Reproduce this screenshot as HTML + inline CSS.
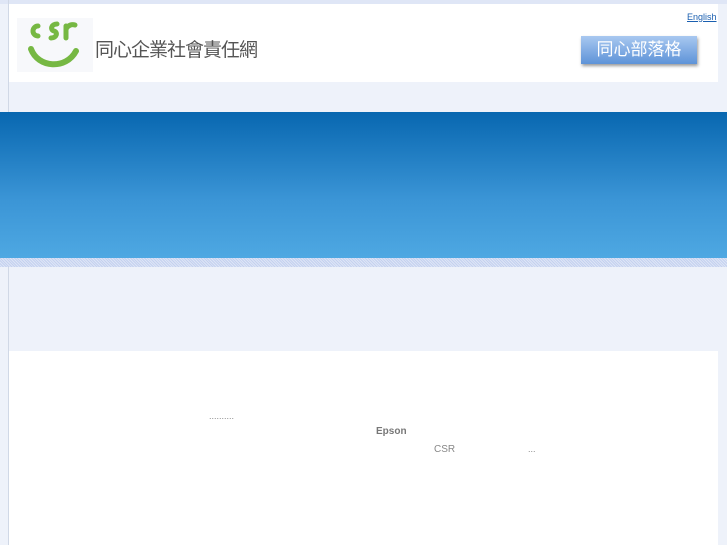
<!DOCTYPE html>
<html><head><meta charset="utf-8"><style>
body{margin:0;width:727px;height:545px;overflow:hidden;background:#eef2fa;font-family:"Liberation Sans","Noto Sans CJK TC",sans-serif;position:relative}
.a{position:absolute}
</style></head><body>
<div class="a" style="left:0;top:0;width:727px;height:4px;background:#dfe6f6"></div>
<div class="a" style="left:8px;top:0;width:1px;height:545px;background:#d0d8e6"></div>
<div class="a" style="left:9px;top:4px;width:709px;height:78px;background:#fff"></div>
<div class="a" style="left:17px;top:18px;width:76px;height:54px;background:#f7f8fb"></div>
<svg class="a" style="left:26px;top:20px" width="56" height="52" viewBox="0 0 56 52">
<path d="M12 6 A5 5 0 1 0 12 16" fill="none" stroke="#76b843" stroke-width="5" stroke-linecap="round"/>
<path d="M31 4 C25 4 24 10 28 11 C32 12 31 18 25 18" fill="none" stroke="#76b843" stroke-width="5" stroke-linecap="round"/>
<path d="M40 18 V6 M40 9 C42 5 46 4 49 5" fill="none" stroke="#76b843" stroke-width="5" stroke-linecap="round"/>
<path d="M5 29 C12 48 40 50 50 31" fill="none" stroke="#76b843" stroke-width="6" stroke-linecap="round"/>
</svg>
<div class="a" style="left:95px;top:35px;font-size:19px;color:#555;letter-spacing:-1px">同心企業社會責任網</div>
<a class="a" style="left:687px;top:12px;font-size:9px;color:#1a5fb0;text-decoration:underline">English</a>
<div class="a" style="left:581px;top:36px;width:116px;height:28px;background:linear-gradient(#a8c8f0,#5e93d8);box-shadow:1px 2px 3px #999;color:#fff;font-size:17px;text-align:center;line-height:28px">同心部落格</div>
<div class="a" style="left:0;top:112px;width:727px;height:146px;background:linear-gradient(#0867b0,#3b95d6 60%,#4ea8e2)"></div>
<div class="a" style="left:0;top:258px;width:727px;height:9px;background:repeating-linear-gradient(45deg,#c4d1ef 0 1px,#dde5f6 1px 2px)"></div>
<div class="a" style="left:9px;top:351px;width:709px;height:194px;background:#fff"></div>
<div class="a" style="left:209px;top:411px;font-size:9px;color:#888">..........</div>
<div class="a" style="left:376px;top:426px;font-size:10px;color:#777;font-weight:bold">Epson</div>
<div class="a" style="left:434px;top:444px;font-size:10px;color:#888">CSR</div>
<div class="a" style="left:528px;top:444px;font-size:9px;color:#888">...</div>
</body></html>
